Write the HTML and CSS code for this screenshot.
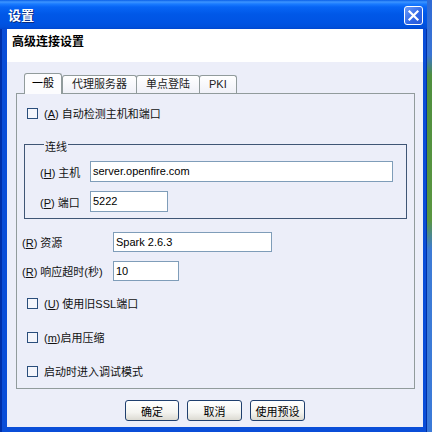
FILE: index.html
```html
<!DOCTYPE html>
<html lang="zh">
<head>
  <meta charset="UTF-8">
  <title>设置</title>
  <link rel="stylesheet" href="styles.css">
</head>
<body>
  <div class="window">
    <div class="titlebar">
      <span class="title">设置</span>
      <span class="close">
        <svg width="19" height="19" viewBox="0 0 19 19">
          <path d="M5.5 5.5 L13.5 13.5 M13.5 5.5 L5.5 13.5" stroke="#fff" stroke-width="2.2" stroke-linecap="square"/>
        </svg>
      </span>
    </div>

    <div class="client">
      <div class="header">高级连接设置</div>

      <div class="tabs-area">
        <div class="tab-row">
          <div class="tab selected">一般</div>
          <div class="tab">代理服务器</div>
          <div class="tab">单点登陆</div>
          <div class="tab">PKI</div>
        </div>

        <div class="panel">
          <div class="check-row first">
            <span class="box"></span>
            <span>(<u>A</u>) 自动检测主机和端口</span>
          </div>

          <div class="group">
            <div class="group-title">连线</div>
            <div class="field-row host">
              <span class="label">(<u>H</u>) 主机</span>
              <span class="input wide">server.openfire.com</span>
            </div>
            <div class="field-row port">
              <span class="label">(<u>P</u>) 端口</span>
              <span class="input short">5222</span>
            </div>
          </div>

          <div class="field-row res">
            <span class="label long">(<u>R</u>) 资源</span>
            <span class="input mid">Spark 2.6.3</span>
          </div>
          <div class="field-row timeout">
            <span class="label long">(<u>R</u>) 响应超时(秒)</span>
            <span class="input tiny">10</span>
          </div>

          <div class="check-row ssl">
            <span class="box"></span>
            <span>(<u>U</u>) 使用旧SSL端口</span>
          </div>
          <div class="check-row next">
            <span class="box"></span>
            <span>(<u>m</u>)启用压缩</span>
          </div>
          <div class="check-row next">
            <span class="box"></span>
            <span>启动时进入调试模式</span>
          </div>
        </div>
      </div>

      <div class="buttons">
        <button class="btn">确定</button>
        <button class="btn">取消</button>
        <button class="btn">使用预设</button>
      </div>
    </div>
  </div>
</body>
</html>
```

FILE: styles.css
```css
body {
  margin: 0;
  width: 432px;
  height: 432px;
  overflow: hidden;
  font-family: "Liberation Sans", "Noto Sans CJK SC", sans-serif;
  font-size: 11px;
  color: #111;
  background: linear-gradient(#2f6bd6 0, #3a74d4 55px, #4f8f3e 75px, #5a9640 220px, #3d7bd6 250px, #3b7ad8 100%);
}

.window {
  width: 427px;
  height: 432px;
  display: flex;
  flex-direction: column;
  background: #0a4ed8;
  box-shadow: inset 2px 0 0 #0030a8, inset -1px 0 0 #0030a8;
}

.titlebar {
  height: 29px;
  flex-shrink: 0;
  display: flex;
  align-items: center;
  justify-content: space-between;
  padding: 0 4px 0 8px;
  background: linear-gradient(#0a5fe8 0, #3d95ff 2px, #1a7bff 4px, #0765f5 7px, #0058e8 14px, #0054e4 22px, #0050dc 27px, #0046cf 29px);
}

.title {
  color: #fff;
  font-weight: bold;
  font-size: 13px;
  text-shadow: 1px 1px 0 #0a2a80;
  margin-top: -1px;
}

.close {
  width: 19px;
  height: 19px;
  box-sizing: border-box;
  border: 1px solid #fff;
  border-radius: 3px;
  background: linear-gradient(135deg, #6d9cf8, #2f66e6 60%, #2a5ad8);
  display: flex;
  margin-top: 2px;
}

.close svg {
  margin: -1px;
}

.client {
  flex: 1;
  margin: 0 4px 5px 7px;
  background: #eceef9;
  display: flex;
  flex-direction: column;
}

.header {
  height: 33px;
  box-sizing: border-box;
  background: #fff;
  padding: 6px 0 0 5px;
  line-height: 14px;
  font-size: 12px;
  font-weight: bold;
  color: #000;
}

.tabs-area {
  margin: 11px 8px 0 9px;
}

.tab-row {
  height: 20px;
  display: flex;
  align-items: flex-end;
  padding-left: 8px;
}

.tab {
  height: 18px;
  box-sizing: border-box;
  padding: 0 9px;
  line-height: 16px;
  border: 1px solid #919b9c;
  border-bottom: none;
  border-radius: 3px 3px 0 0;
  background: linear-gradient(#ffffff, #f0f1f8);
  color: #222;
}

.tab + .tab {
  margin-left: -1px;
}

.tab.selected {
  height: 21px;
  padding: 0 7px;
  margin-bottom: -1px;
  margin-right: 1px;
  background: #fcfcfe;
  position: relative;
  z-index: 1;
  line-height: 18px;
  color: #000;
}

.panel {
  height: 296px;
  box-sizing: border-box;
  border: 1px solid #919b9c;
  padding-top: 9px;
}

.check-row {
  height: 20px;
  display: flex;
  align-items: center;
  padding-left: 10px;
}

.check-row.ssl {
  margin-top: 12px;
}

.check-row.next {
  margin-top: 14px;
}

.box {
  width: 11px;
  height: 11px;
  box-sizing: border-box;
  border: 1px solid #2a4e7c;
  background: #f4f5fb;
  margin-right: 6px;
}

.group {
  margin: 21px 7px 0 7px;
  border: 1px solid #3f5575;
  padding: 0 0 6px 15px;
}

.group-title {
  width: fit-content;
  margin: -5px 0 0 4px;
  padding: 0 1px;
  line-height: 14px;
  background: #eceef9;
}

.field-row {
  display: flex;
  align-items: center;
}

.field-row.host {
  margin-top: 7px;
}

.field-row.port {
  margin-top: 9px;
}

.field-row.res {
  margin-top: 13px;
  padding-left: 5px;
}

.field-row.timeout {
  margin-top: 9px;
  padding-left: 5px;
}

.label {
  width: 50px;
  flex-shrink: 0;
}

.label.long {
  width: 91px;
}

.input {
  height: 21px;
  box-sizing: border-box;
  border: 1px solid #7f9db9;
  background: #fff;
  padding-left: 2px;
  line-height: 19px;
  color: #000;
}

.res .input,
.timeout .input {
  height: 20px;
  line-height: 18px;
}

.input.wide { width: 303px; }
.input.short { width: 78px; }
.input.mid { width: 159px; }
.input.tiny { width: 66px; }

.buttons {
  margin-top: 11px;
  display: flex;
  justify-content: center;
  gap: 8px;
}

.btn {
  width: 55px;
  height: 21px;
  padding: 0;
  font-family: "Liberation Sans", "Noto Sans CJK SC", sans-serif;
  font-size: 11px;
  color: #000;
  border: 1px solid #1f3f6e;
  border-radius: 3px;
  background: linear-gradient(#ffffff, #f4f4f0 60%, #dcdad2);
}

.btn:first-child {
  width: 54px;
}
```
